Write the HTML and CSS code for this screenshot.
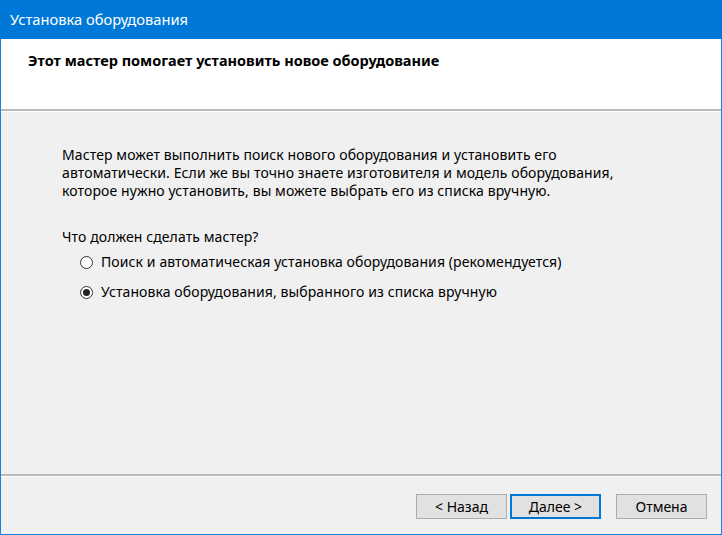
FILE: index.html
```
<!DOCTYPE html>
<html lang="ru">
    <head>
        <meta charset="utf-8">
        <title>Установка оборудования</title>
        <link rel="stylesheet" href="styles.css">
    </head>
    <body>
        <div class="window">
            <div class="titlebar">Установка оборудования</div>

            <div class="header">
                Этот мастер помогает установить новое оборудование
            </div>

            <div class="content">
                <p class="intro">
                    Мастер может выполнить поиск нового оборудования и установить его<br>
                    автоматически. Если же вы точно знаете изготовителя и модель оборудования,<br>
                    которое нужно установить, вы можете выбрать его из списка вручную.
                </p>

                <p class="question">Что должен сделать мастер?</p>

                <div class="options">
                    <label class="option">
                        <span class="radio"></span>
                        Поиск и автоматическая установка оборудования (рекомендуется)
                    </label>
                    <label class="option">
                        <span class="radio checked"></span>
                        Установка оборудования, выбранного из списка вручную
                    </label>
                </div>
            </div>

            <div class="footer">
                <button class="btn">&lt; Назад</button>
                <button class="btn default">Далее &gt;</button>
                <button class="btn cancel">Отмена</button>
            </div>
        </div>
    </body>
</html>
```

FILE: styles.css
```
html, body {
    margin:0;
    padding:0;
}

body {
    font-family:"Noto Sans", "Open Sans", sans-serif;
    font-size:14px;
    letter-spacing:0.1px;
    color:#000;
}

.window {
    width:722px;
    height:535px;
    box-sizing:border-box;
    border:1px solid #1883d7;
    border-top:none;
    display:flex;
    flex-direction:column;
    background-color:#f0f0f0;
}

.titlebar {
    height:39px;
    margin:0 -1px;
    padding-left:10px;
    background-color:#0078d7;
    color:#fff;
    font-size:14.7px;
    letter-spacing:0;
    line-height:38px;
}

.header {
    height:72px;
    box-sizing:border-box;
    padding:12px 0 0 27px;
    background-color:#fff;
    font-weight:bold;
    font-size:14.5px;
    letter-spacing:0;
    line-height:18px;
    border-bottom:2px solid #b9b9b9;
    box-shadow:0 1px 0 #fff;
    margin-bottom:1px;
}

.content {
    flex:1;
    padding:34px 0 0 61px;
    border-bottom:2px solid #b9b9b9;
    box-shadow:0 1px 0 #fff;
}

.intro {
    margin:0;
    line-height:18px;
}

.question {
    margin:28px 0 0;
    line-height:18px;
}

.options {
    margin:7px 0 0 18px;
    display:flex;
    flex-direction:column;
    gap:12px;
}

.option {
    display:flex;
    align-items:center;
    gap:8px;
    line-height:18px;
}

.radio {
    width:13px;
    height:13px;
    box-sizing:border-box;
    border:1px solid #333;
    border-radius:50%;
    background-color:#fff;
    display:flex;
    align-items:center;
    justify-content:center;
}

.radio.checked::after {
    content:"";
    width:7px;
    height:7px;
    border-radius:50%;
    background-color:#222;
}

.footer {
    height:57px;
    box-sizing:border-box;
    margin-top:1px;
    padding:17px 14px 0 0;
    display:flex;
    justify-content:flex-end;
    align-items:flex-start;
    gap:3px;
}

.btn {
    width:91px;
    height:25px;
    box-sizing:border-box;
    border:1px solid #adadad;
    background-color:#e1e1e1;
    font-family:"Noto Sans", "Open Sans", sans-serif;
    font-size:14px;
    color:#000;
    padding:0;
}

.btn.default {
    border:2px solid #0078d7;
}

.btn.cancel {
    margin-left:12px;
}
```
